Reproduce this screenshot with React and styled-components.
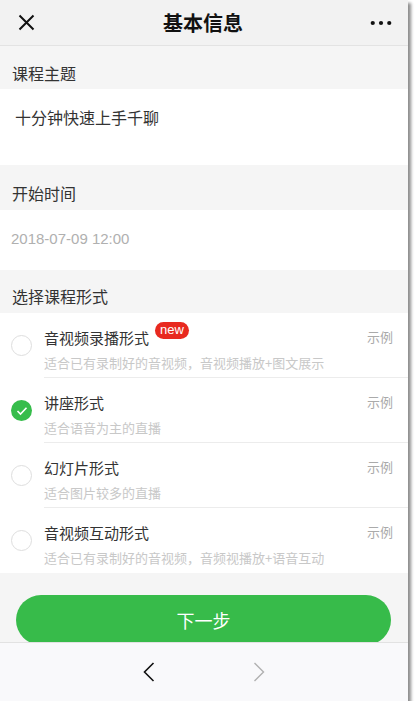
import React, { useState } from 'react';
import styled, { createGlobalStyle } from 'styled-components';

const GlobalStyle = createGlobalStyle`
    body {
        margin: 0;
        background: #fff;
        font-family: "Noto Sans CJK SC", "Noto Sans", sans-serif;
    }
`;

const Phone = styled.div`
    width: 408px;
    height: 701px;
    display: flex;
    flex-direction: column;
    background: #f5f5f5;
    box-shadow: 3px 3px 3px rgba(0, 0, 0, 0.45);
    overflow: hidden;
`;

const NavBar = styled.div`
    height: 45px;
    flex-shrink: 0;
    display: flex;
    align-items: center;
    justify-content: space-between;
    padding: 0 16px 0 18px;
    background: #f2f2f2;
    border-bottom: 1px solid #e3e3e3;
`;

const NavTitle = styled.div`
    font-size: 20px;
    font-weight: 700;
    color: #111;
    margin-right: 4px;
`;

const IconButton = styled.div`
    width: 22px;
    display: flex;
    align-items: center;
    justify-content: ${({ $end }) => ($end ? 'flex-end' : 'flex-start')};
`;

const Content = styled.div`
    flex: 1;
    overflow: hidden;
`;

const SectionHeader = styled.div`
    height: ${({ $h }) => $h}px;
    box-sizing: border-box;
    padding: ${({ $pt }) => $pt}px 12px 0;
    font-size: 16px;
    line-height: 22px;
    color: #333;
`;

const Field = styled.div`
    height: ${({ $h }) => $h}px;
    box-sizing: border-box;
    padding-top: ${({ $pt }) => $pt}px;
    padding-right: 15px;
    padding-left: ${({ $muted }) => ($muted ? '11px' : '15px')};
    background: #fff;
    font-size: ${({ $muted }) => ($muted ? '15px' : '16px')};
    line-height: ${({ $muted }) => ($muted ? '20px' : '22px')};
    color: ${({ $muted }) => ($muted ? '#b0b0b0' : '#333')};
    font-family: ${({ $muted }) => ($muted ? '"Liberation Sans", Arial, sans-serif' : 'inherit')};
`;

const List = styled.div`
    background: #fff;
`;

const Option = styled.div`
    display: flex;
    align-items: center;
    height: 65px;
    cursor: pointer;
`;

const Radio = styled.div`
    width: 21px;
    height: 21px;
    margin: 0 12px 0 11px;
    flex-shrink: 0;
    border-radius: 50%;
    box-sizing: border-box;
    border: ${({ $checked }) => ($checked ? 'none' : '1px solid #dedede')};
    background: ${({ $checked }) => ($checked ? '#36bd4b' : '#fff')};
    display: flex;
    align-items: center;
    justify-content: center;
`;

const OptionBody = styled.div`
    flex: 1;
    align-self: stretch;
    display: flex;
    padding: 14px 15px 0 0;
    box-sizing: border-box;
    border-bottom: ${({ $last }) => ($last ? 'none' : '1px solid #ececec')};
`;

const OptionText = styled.div`
    flex: 1;
`;

const OptionTitle = styled.div`
    display: flex;
    align-items: flex-start;
    font-size: 15px;
    line-height: 22px;
    color: #333;
`;

const NewBadge = styled.span`
    margin: -5px 0 0 6px;
    height: 17px;
    padding: 0 5px;
    border-radius: 9px;
    background: #e8291f;
    color: #fff;
    font-family: "Liberation Sans", Arial, sans-serif;
    font-size: 13px;
    line-height: 16px;
`;

const OptionDesc = styled.div`
    margin-top: 4px;
    font-size: 13px;
    line-height: 20px;
    color: #c8c8c8;
`;

const Example = styled.div`
    font-size: 13px;
    line-height: 20px;
    color: #aaa;
`;

const NextButton = styled.button`
    display: block;
    width: 375px;
    height: 50px;
    margin: 22px 0 0 16px;
    border: none;
    border-radius: 25px;
    background: #37bb4a;
    color: #fff;
    font-family: inherit;
    font-size: 18px;
    cursor: pointer;
`;

const Toolbar = styled.div`
    height: 58px;
    flex-shrink: 0;
    display: flex;
    align-items: center;
    justify-content: center;
    gap: 98px;
    background: #f9f9fb;
    border-top: 1px solid #e2e2e2;
`;

const options = [
    { title: '音视频录播形式', desc: '适合已有录制好的音视频，音视频播放+图文展示', isNew: true },
    { title: '讲座形式', desc: '适合语音为主的直播' },
    { title: '幻灯片形式', desc: '适合图片较多的直播' },
    { title: '音视频互动形式', desc: '适合已有录制好的音视频，音频视播放+语音互动' },
];

const App = () => {
    const [selected, setSelected] = useState(1);

    return (
        <>
            <GlobalStyle />
            <Phone>
                <NavBar>
                    <IconButton>
                        <svg width="17" height="17" viewBox="0 0 17 17">
                            <path d="M1.5 1.5 L15.5 15.5 M15.5 1.5 L1.5 15.5" stroke="#111" strokeWidth="2" />
                        </svg>
                    </IconButton>
                    <NavTitle>基本信息</NavTitle>
                    <IconButton $end>
                        <svg width="24" height="6" viewBox="0 0 24 6">
                            <circle cx="3" cy="3" r="2.3" fill="#111" />
                            <circle cx="12" cy="3" r="2.3" fill="#111" />
                            <circle cx="21" cy="3" r="2.3" fill="#111" />
                        </svg>
                    </IconButton>
                </NavBar>
                <Content>
                    <SectionHeader $h={43} $pt={16}>课程主题</SectionHeader>
                    <Field $h={76} $pt={17}>十分钟快速上手千聊</Field>
                    <SectionHeader $h={45} $pt={17}>开始时间</SectionHeader>
                    <Field $h={60} $pt={19} $muted>2018-07-09 12:00</Field>
                    <SectionHeader $h={43} $pt={15}>选择课程形式</SectionHeader>
                    <List>
                        {options.map((opt, index) => (
                            <Option key={index} onClick={() => setSelected(index)}>
                                <Radio $checked={selected === index}>
                                    {selected === index && (
                                        <svg width="12" height="10" viewBox="0 0 12 10">
                                            <path d="M1.5 5 L4.5 8 L10.5 1.8" stroke="#fff" strokeWidth="1.6" fill="none" />
                                        </svg>
                                    )}
                                </Radio>
                                <OptionBody $last={index === options.length - 1}>
                                    <OptionText>
                                        <OptionTitle>
                                            {opt.title}
                                            {opt.isNew && <NewBadge>new</NewBadge>}
                                        </OptionTitle>
                                        <OptionDesc>{opt.desc}</OptionDesc>
                                    </OptionText>
                                    <Example>示例</Example>
                                </OptionBody>
                            </Option>
                        ))}
                    </List>
                    <NextButton>下一步</NextButton>
                </Content>
                <Toolbar>
                    <svg width="12" height="20" viewBox="0 0 12 20">
                        <path d="M10.5 1 L1.5 10 L10.5 19" stroke="#111" strokeWidth="1.6" fill="none" />
                    </svg>
                    <svg width="12" height="20" viewBox="0 0 12 20">
                        <path d="M1.5 1 L10.5 10 L1.5 19" stroke="#b0b0b0" strokeWidth="1.4" fill="none" />
                    </svg>
                </Toolbar>
            </Phone>
        </>
    );
};

export default App;
